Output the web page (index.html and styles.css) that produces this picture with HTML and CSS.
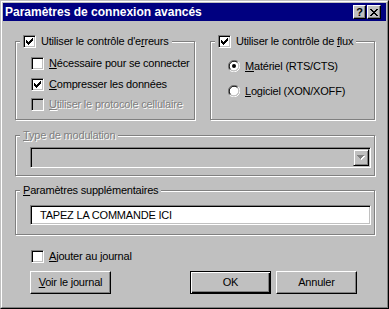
FILE: index.html
```html
<!DOCTYPE html>
<html lang="fr">
<head>
<meta charset="utf-8">
<title>Paramètres de connexion avancés</title>
<link rel="stylesheet" href="styles.css">
</head>
<body>
<div class="win">
  <div class="win-in">
    <div class="titlebar">
      <span class="title">Paramètres de connexion avancés</span>
      <div class="tbtns">
        <span class="tbtn help">?</span>
        <span class="tbtn close"><svg width="8" height="7" viewBox="0 0 8 7"><path d="M0 0h2v1h1v1h2v-1h1v-1h2v1h-1v1h-1v1h-1v1h1v1h1v1h1v1h-2v-1h-1v-1h-2v1h-1v1h-2v-1h1v-1h1v-1h1v-1h-1v-1h-1v-1h-1z" fill="#000"/></svg></span>
      </div>
    </div>
    <div class="content">
      <div class="toprow">
        <div class="group g1">
          <div class="legend">
            <span class="cb"><svg class="chk" width="11" height="11" viewBox="0 0 11 11"><path d="M2 4h1v3h-1zM3 5h1v3h-1zM4 6h1v3h-1zM5 5h1v3h-1zM6 4h1v3h-1zM7 3h1v3h-1zM8 2h1v3h-1z"/></svg></span>
            <span class="lbl">Utiliser le contrôle d'e<u>r</u>reurs</span>
          </div>
          <div class="rows">
            <div class="row"><span class="cb"></span><span class="lbl"><u>N</u>écessaire pour se connecter</span></div>
            <div class="row"><span class="cb"><svg class="chk" width="11" height="11" viewBox="0 0 11 11"><path d="M2 4h1v3h-1zM3 5h1v3h-1zM4 6h1v3h-1zM5 5h1v3h-1zM6 4h1v3h-1zM7 3h1v3h-1zM8 2h1v3h-1z"/></svg></span><span class="lbl"><u>C</u>ompresser les données</span></div>
            <div class="row"><span class="cb disabled"></span><span class="lbl etched"><u>U</u>tiliser le protocole cellulaire</span></div>
          </div>
        </div>
        <div class="group g2">
          <div class="legend">
            <span class="cb"><svg class="chk" width="11" height="11" viewBox="0 0 11 11"><path d="M2 4h1v3h-1zM3 5h1v3h-1zM4 6h1v3h-1zM5 5h1v3h-1zM6 4h1v3h-1zM7 3h1v3h-1zM8 2h1v3h-1z"/></svg></span>
            <span class="lbl">Utiliser le contrôle de <u>f</u>lux</span>
          </div>
          <div class="rows radios">
            <div class="row">
              <svg class="radio" width="12" height="12" viewBox="0 0 12 12">
                <circle cx="6" cy="6" r="4.5" fill="#fff"/>
                <path d="M1.76 10.24A6 6 0 0 1 10.24 1.76" fill="none" stroke="#808080"/>
                <path d="M10.24 1.76A6 6 0 0 1 1.76 10.24" fill="none" stroke="#fff"/>
                <path d="M2.47 9.53A5 5 0 0 1 9.53 2.47" fill="none" stroke="#000"/>
                <path d="M9.53 2.47A5 5 0 0 1 2.47 9.53" fill="none" stroke="#c0c0c0"/>
                <circle cx="6" cy="6" r="2" fill="#000"/>
              </svg>
              <span class="lbl"><u>M</u>atériel (RTS/CTS)</span>
            </div>
            <div class="row">
              <svg class="radio" width="12" height="12" viewBox="0 0 12 12">
                <circle cx="6" cy="6" r="4.5" fill="#fff"/>
                <path d="M1.76 10.24A6 6 0 0 1 10.24 1.76" fill="none" stroke="#808080"/>
                <path d="M10.24 1.76A6 6 0 0 1 1.76 10.24" fill="none" stroke="#fff"/>
                <path d="M2.47 9.53A5 5 0 0 1 9.53 2.47" fill="none" stroke="#000"/>
                <path d="M9.53 2.47A5 5 0 0 1 2.47 9.53" fill="none" stroke="#c0c0c0"/>
              </svg>
              <span class="lbl"><u>L</u>ogiciel (XON/XOFF)</span>
            </div>
          </div>
        </div>
      </div>

      <div class="group g3">
        <div class="legend"><span class="lbl etched"><u>T</u>ype de modulation</span></div>
        <div class="combo">
          <span class="dropbtn"><svg width="8" height="5" viewBox="0 0 8 5"><path d="M1 1h7v1h-1v1h-1v1h-1v1h-1v-1h-1v-1h-1v-1h-1z" fill="#fff"/><path d="M0 0h7v1h-1v1h-1v1h-1v1h-1v-1h-1v-1h-1v-1h-1z" fill="#808080"/></svg></span>
        </div>
      </div>

      <div class="group g4">
        <div class="legend"><span class="lbl"><u>P</u>aramètres supplémentaires</span></div>
        <div class="edit">TAPEZ LA COMMANDE ICI</div>
      </div>

      <div class="row ajout"><span class="cb"></span><span class="lbl"><u>A</u>jouter au journal</span></div>

      <div class="buttons">
        <span class="btn"><span><u>V</u>oir le journal</span></span>
        <span class="btn default ok">OK</span>
        <span class="btn">Annuler</span>
      </div>
    </div>
  </div>
</div>
</body>
</html>
```
FILE: styles.css
```css
html, body {
  margin: 0;
  padding: 0;
}
body {
  background: #c0c0c0;
  font-family: "Liberation Sans", Arial, sans-serif;
  font-size: 11px;
  letter-spacing: -0.2px;
  color: #000;
}
u { text-decoration: underline; text-underline-offset: 1px; }

.win {
  width: 389px;
  height: 309px;
  box-sizing: border-box;
  border: 1px solid;
  border-color: #c0c0c0 #000 #000 #c0c0c0;
  background: #c0c0c0;
}
.win-in {
  height: 100%;
  box-sizing: border-box;
  border: 1px solid;
  border-color: #fff #808080 #808080 #fff;
  padding: 1px;
  display: flex;
  flex-direction: column;
}

.titlebar {
  height: 18px;
  flex: none;
  background: #000080;
  color: #fff;
  display: flex;
  align-items: center;
  justify-content: space-between;
  padding: 0 5px 0 2px;
}
.title {
  font-weight: bold;
  font-size: 12px;
  letter-spacing: 0;
  line-height: 18px;
}
.tbtns {
  display: flex;
  gap: 1px;
}
.tbtn {
  width: 13px;
  height: 14px;
  box-sizing: border-box;
  background: #c0c0c0;
  border: 1px solid;
  border-color: #fff #000 #000 #fff;
  box-shadow: inset -1px -1px #808080;
  display: flex;
  align-items: center;
  justify-content: center;
  color: #000;
}
.tbtn.close { width: 14px; }
.tbtn.help {
  font-weight: bold;
  font-size: 11px;
  letter-spacing: 0;
  line-height: 12px;
}

.content {
  flex: 1;
  padding: 20px 11px 0 12px;
  display: flex;
  flex-direction: column;
}

.toprow {
  display: flex;
  gap: 15px;
}

.group {
  position: relative;
  box-sizing: border-box;
  border: 1px solid #808080;
  box-shadow: inset 1px 1px #fff, 1px 1px #fff;
}
.legend {
  position: absolute;
  top: -7px;
  left: 4px;
  height: 13px;
  padding: 0 3px;
  background: #c0c0c0;
  display: flex;
  align-items: center;
  gap: 5px;
}
.lbl {
  line-height: 13px;
  white-space: nowrap;
}
.etched {
  color: #808080;
  text-shadow: 1px 1px 0 #fff;
}

.g1 { width: 180px; height: 79px; }
.g2 { width: 165px; height: 79px; }

.rows {
  display: flex;
  flex-direction: column;
  gap: 7.5px;
  padding: 15px 0 0 15px;
}
.radios {
  padding: 18px 0 0 17px;
  gap: 13px;
}
.radios .row { height: 12px; }
.radios .lbl { line-height: 12px; }

.row {
  display: flex;
  align-items: center;
  gap: 5px;
}

.cb {
  flex: none;
  width: 13px;
  height: 13px;
  box-sizing: border-box;
  border: 1px solid;
  border-color: #808080 #fff #fff #808080;
  box-shadow: inset 1px 1px #000, inset -1px -1px #c0c0c0;
  background: #fff;
  display: block;
}
.cb.disabled { background: #c0c0c0; }
.chk { display: block; fill: #000; }
.radio { flex: none; display: block; }

.g3 {
  margin-top: 15px;
  height: 41px;
  padding: 11px 0 0 14px;
}
.combo {
  width: 341px;
  height: 21px;
  box-sizing: border-box;
  border: 1px solid;
  border-color: #808080 #fff #fff #808080;
  box-shadow: inset 1px 1px #000, inset -1px -1px #c0c0c0;
  background: #c0c0c0;
  padding: 1px;
  display: flex;
  justify-content: flex-end;
}
.dropbtn {
  width: 16px;
  height: 17px;
  box-sizing: border-box;
  border: 1px solid;
  border-color: #c0c0c0 #000 #000 #c0c0c0;
  box-shadow: inset 1px 1px #fff, inset -1px -1px #808080;
  background: #c0c0c0;
  display: flex;
  align-items: center;
  justify-content: center;
}
.dropbtn svg { display: block; }

.g4 {
  margin-top: 14px;
  height: 45px;
  padding: 14px 0 0 14px;
}
.edit {
  width: 341px;
  height: 20px;
  box-sizing: border-box;
  border: 1px solid;
  border-color: #808080 #fff #fff #808080;
  box-shadow: inset 1px 1px #000, inset -1px -1px #c0c0c0;
  background: #fff;
  padding: 0 0 0 9px;
  line-height: 18px;
  white-space: nowrap;
}

.ajout {
  margin: 15px 0 0 16px;
}

.buttons {
  margin: 8px 18px 0 15px;
  display: flex;
  gap: 5px;
}
.btn {
  width: 81px;
  height: 23px;
  box-sizing: border-box;
  border: 1px solid;
  border-color: #fff #000 #000 #fff;
  box-shadow: inset -1px -1px #808080;
  display: flex;
  align-items: center;
  justify-content: center;
  line-height: 13px;
}
.btn.ok { margin-left: auto; }
.btn.default {
  border: 1px solid #000;
  box-shadow: inset 1px 1px #fff, inset -1px -1px #000, inset -2px -2px #808080;
}
```
